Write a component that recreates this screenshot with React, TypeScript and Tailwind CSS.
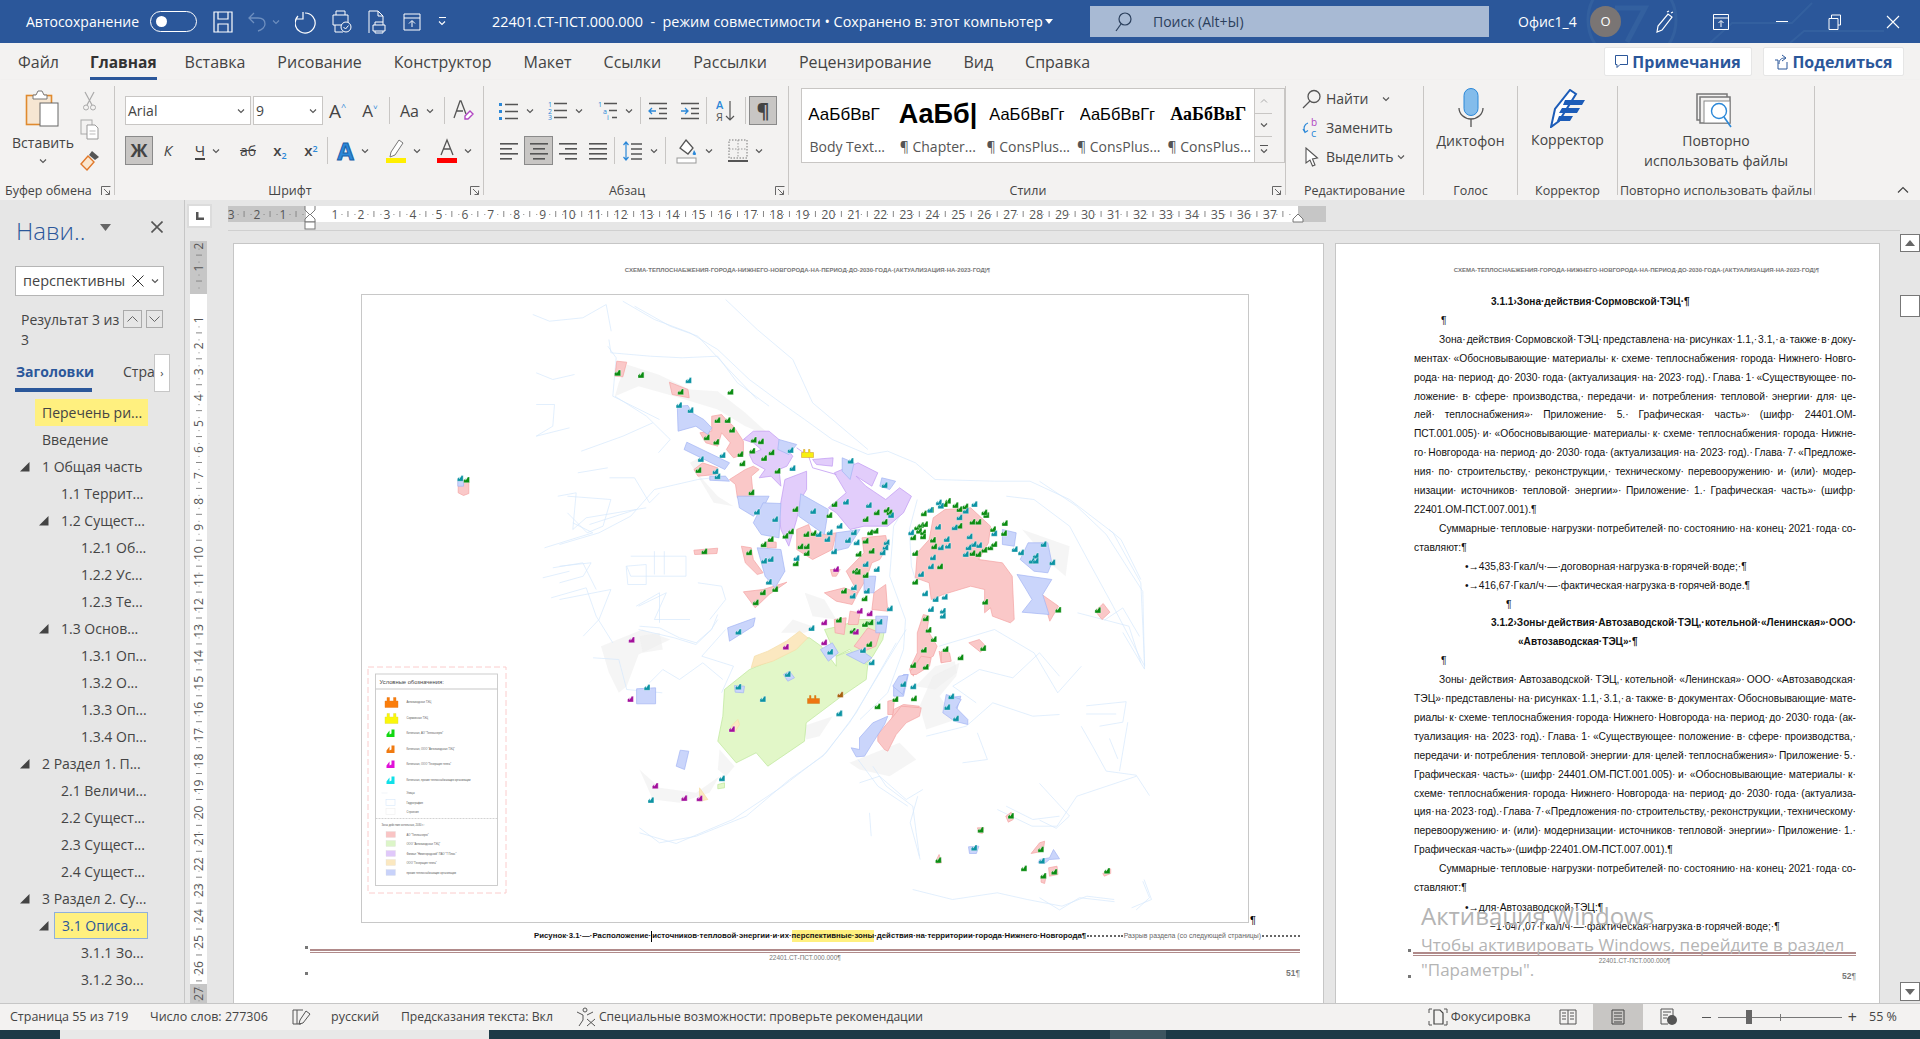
import type { ReactNode } from "react";

const ui = "font-['Open_Sans',sans-serif]";
const doc = "font-['Liberation_Sans',Arial,sans-serif]";

// ---------- small ribbon icons ----------
const Chev = ({ c = "#555" }: { c?: string }) => (
  <svg width="8" height="6" viewBox="0 0 8 6" className="shrink-0">
    <path d="M1 1.5 L4 4.5 L7 1.5" fill="none" stroke={c} strokeWidth="1.1" />
  </svg>
);

const Launcher = () => (
  <svg width="10" height="10" viewBox="0 0 10 10" className="shrink-0">
    <path d="M0.5 9 V0.5 H9.5 M3 3 L8.5 8.5 M8.5 4.5 V8.5 H4.5" fill="none" stroke="#666" strokeWidth="1" />
  </svg>
);

const Lines = ({ rows }: { rows: number[][] }) => (
  <svg width="20" height="20" viewBox="0 0 20 20">
    {rows.map(([x1, x2], i) => (
      <rect key={i} x={x1} y={2 + i * 5} width={x2 - x1} height="1.6" fill="#555" />
    ))}
  </svg>
);

const Btn = ({ w, chev, active, children }: { w: number; chev?: boolean; active?: boolean; children: ReactNode }) => (
  <div
    className={`flex h-[29px] shrink-0 items-center justify-center gap-[7px] text-[#444] ${active ? "border border-[#8a8a8a] bg-[#c8c6c4]" : ""}`}
    style={{ width: w }}
  >
    {children}
    {chev && <Chev />}
  </div>
);

const Sep = () => <div className="mx-px h-[27px] w-px shrink-0 bg-[#c8c6c4]" />;

const Group = ({ w, label, launcher, children }: { w: number; label: string; launcher?: boolean; children: ReactNode }) => (
  <div className="flex h-[109px] shrink-0 flex-col border-r border-[#c8c6c4]" style={{ width: w }}>
    <div className="h-[95px] overflow-hidden">{children}</div>
    <div className={`relative flex h-[14px] translate-y-[3px] items-center whitespace-nowrap text-[12.5px] leading-[14px] text-[#444] ${launcher ? (w < 120 ? "pl-[5px]" : "justify-center pr-[18px]") : "justify-center"}`}>
      {label}
      {launcher && (
        <span className="absolute right-[3px] top-[2px]">
          <Launcher />
        </span>
      )}
    </div>
  </div>
);

const Style = ({ sample, name, cls }: { sample: string; name: string; cls: string }) => (
  <div className="flex h-full w-[90.5px] shrink-0 flex-col items-center overflow-hidden">
    <div className={`flex h-[46px] w-[78px] items-center justify-start overflow-hidden whitespace-nowrap pt-[5px] text-black ${cls}`}>{sample}</div>
    <div className="whitespace-nowrap pt-[2px] text-[14px] leading-[20px] text-[#555]">{name}</div>
  </div>
);

const Ribbon = () => (
  <div className={`flex h-[120px] shrink-0 bg-[#f3f2f1] pt-[6px] shadow-[0_2px_3px_rgba(0,0,0,0.2)] ${ui}`}>
    <Group w={115} label="Буфер обмена" launcher>
      <div className="flex">
        <div className="ml-[4px] flex w-[78px] flex-col items-center pt-[3px]">
          <svg width="38" height="38" viewBox="0 0 38 38">
            <rect x="2.5" y="6.5" width="25" height="29" fill="#f6e6d2" stroke="#e08a2e" strokeWidth="1.6" />
            <path d="M9 6 h3 l2 -4 h4 l2 4 h3 v4 h-14z" fill="#fff" stroke="#777" />
            <rect x="16" y="14" width="18" height="23" fill="#fff" stroke="#666" />
          </svg>
          <div className="mt-[7px] text-[14px] leading-[18px] text-[#444]">Вставить</div>
          <div className="mt-[6px]">
            <Chev />
          </div>
        </div>
        <div className="flex w-[16px] flex-col items-center gap-[8px] pt-[5px]">
          <svg width="16" height="20" viewBox="0 0 16 20" className="shrink-0">
            <path d="M3 1 L10 14 M12 1 L5 14" stroke="#aaa" strokeWidth="1.2" fill="none" />
            <circle cx="4" cy="16.5" r="2.5" fill="none" stroke="#aaa" />
            <circle cx="11" cy="16.5" r="2.5" fill="none" stroke="#aaa" />
          </svg>
          <svg width="20" height="22" viewBox="0 0 20 22" className="shrink-0">
            <rect x="1" y="1" width="11" height="14" fill="#f3f2f1" stroke="#aaa" />
            <path d="M7 6 h8 l3 3 v11 h-11z" fill="#fff" stroke="#999" />
            <path d="M9.5 12 h6 M9.5 15 h6" stroke="#bbb" />
          </svg>
          <svg width="22" height="22" viewBox="0 0 22 22" className="shrink-0">
            <path d="M13 2 l7 6 -4 3 -6 -5z" fill="#555" />
            <path d="M9 7 l6 6 -7 8 -6 -6z" fill="#fbe7cf" stroke="#e0782a" strokeWidth="1.4" />
          </svg>
        </div>
      </div>
    </Group>

    <Group w={369} label="Шрифт" launcher>
      <div className="pl-[10px] pt-[10px]">
        <div className="flex items-center">
          <div className="mr-[2px] flex h-[29px] w-[126px] items-center justify-between border border-[#c8c6c4] bg-white pl-[2px] pr-[5px] text-[14px] text-[#444]">
            Arial
            <Chev />
          </div>
          <div className="flex h-[29px] w-[70px] items-center justify-between border border-[#c8c6c4] bg-white pl-[2px] pr-[5px] text-[14px] text-[#444]">
            9
            <Chev />
          </div>
          <Btn w={29}>
            <span className="text-[19px] leading-[24px]">A</span>
            <span className="-ml-[7px] -mt-2 text-[9px] leading-[12px] text-[#2b88d8]">^</span>
          </Btn>
          <Btn w={36}>
            <span className="text-[17px] leading-[24px]">A</span>
            <span className="-ml-[7px] -mt-2 text-[8px] leading-[12px] text-[#2b88d8]">˅</span>
          </Btn>
          <Sep />
          <Btn w={52} chev>
            <span className="text-[16px]">Aa</span>
          </Btn>
          <Sep />
          <Btn w={34}>
            <svg width="22" height="24" viewBox="0 0 22 24">
              <path d="M2 19 L8 2 H9 L14 15 M4.5 12 H11" fill="none" stroke="#555" strokeWidth="1.3" />
              <path d="M13 17 l5 -5 3 3 -5 5 -3 0z" fill="#fff" stroke="#b146c2" strokeWidth="1.4" />
            </svg>
          </Btn>
        </div>
        <div className="mt-[11px] flex items-center">
          <Btn w={28} active>
            <span className="text-[18px] font-bold">Ж</span>
          </Btn>
          <Btn w={30}>
            <span className="text-[15px] italic">К</span>
          </Btn>
          <Btn w={49} chev>
            <span className="border-b-2 border-[#444] text-[15px] leading-[16px]">Ч</span>
          </Btn>
          <Btn w={32}>
            <span className="text-[14px] line-through">аб</span>
          </Btn>
          <Btn w={32}>
            <span className="text-[15px] font-semibold">x<sub className="text-[9px] text-[#2b88d8]">2</sub></span>
          </Btn>
          <Btn w={30}>
            <span className="text-[15px] font-semibold">x<sup className="text-[9px] text-[#2b88d8]">2</sup></span>
          </Btn>
          <Sep />
          <Btn w={48} chev>
            <span className="text-[24px] font-bold leading-none text-[#2b88d8] [-webkit-text-stroke:1px_#1a5fa8]">A</span>
          </Btn>
          <Btn w={52} chev>
            <svg width="20" height="26" viewBox="0 0 20 26">
              <path d="M5 14 L13 2 l4 3 -8 12 -5 2z" fill="#fff" stroke="#777" />
              <rect x="0" y="20" width="20" height="5" fill="#ffef00" />
            </svg>
          </Btn>
          <Btn w={50} chev>
            <svg width="20" height="26" viewBox="0 0 20 26">
              <path d="M4 17 L10 2 L16 17 M6 11 H14" fill="none" stroke="#555" strokeWidth="1.3" />
              <rect x="0" y="20" width="20" height="5" fill="#f00" />
            </svg>
          </Btn>
        </div>
      </div>
    </Group>

    <Group w={305} label="Абзац" launcher>
      <div className="pl-[9px] pt-[10px]">
        <div className="flex items-center">
          <Btn w={46} chev>
            <svg width="20" height="20" viewBox="0 0 20 20">
              <path d="M0 2h3v3H0zM0 9h3v3H0zM0 16h3v3H0z" fill="#2b88d8" />
              <path d="M6 3.5h13M6 10.5h13M6 17.5h13" stroke="#555" strokeWidth="1.6" />
            </svg>
          </Btn>
          <Btn w={52} chev>
            <svg width="20" height="21" viewBox="0 0 20 21">
              <text x="0" y="7" fontSize="7" fill="#2b88d8">1</text>
              <text x="0" y="13.5" fontSize="7" fill="#2b88d8">2</text>
              <text x="0" y="20" fontSize="7" fill="#2b88d8">3</text>
              <path d="M6 3.5h13M6 10.5h13M6 17.5h13" stroke="#555" strokeWidth="1.6" />
            </svg>
          </Btn>
          <Btn w={48} chev>
            <svg width="20" height="21" viewBox="0 0 20 21">
              <text x="0" y="7" fontSize="7" fill="#2b88d8">1</text>
              <text x="5" y="13.5" fontSize="7" fill="#2b88d8">a</text>
              <text x="9" y="20" fontSize="7" fill="#2b88d8">i</text>
              <path d="M6 3.5h13M11 10.5h8M14 17.5h5" stroke="#555" strokeWidth="1.6" />
            </svg>
          </Btn>
          <Sep />
          <Btn w={32}>
            <svg width="20" height="20" viewBox="0 0 20 20">
              <path d="M1 2.5h18M11 7.5h8M11 12.5h8M1 17.5h18" stroke="#555" strokeWidth="1.5" />
              <path d="M8 10H1M4 7l-3 3 3 3" fill="none" stroke="#2b88d8" strokeWidth="1.3" />
            </svg>
          </Btn>
          <Btn w={31}>
            <svg width="20" height="20" viewBox="0 0 20 20">
              <path d="M1 2.5h18M11 7.5h8M11 12.5h8M1 17.5h18" stroke="#555" strokeWidth="1.5" />
              <path d="M1 10h7M5 7l3 3-3 3" fill="none" stroke="#2b88d8" strokeWidth="1.3" />
            </svg>
          </Btn>
          <Sep />
          <Btn w={36}>
            <svg width="20" height="24" viewBox="0 0 20 24">
              <text x="0" y="10" fontSize="11" fill="#2b88d8" fontWeight="600">A</text>
              <text x="0" y="22" fontSize="11" fill="#555">Я</text>
              <path d="M14 2v19M10 17l4 4 4-4" fill="none" stroke="#555" strokeWidth="1.2" />
            </svg>
          </Btn>
          <Sep />
          <div className="ml-[2px]">
            <Btn w={28} active>
              <span className="text-[20px] font-bold">¶</span>
            </Btn>
          </div>
        </div>
        <div className="mt-[11px] flex items-center">
          <Btn w={31}>
            <Lines rows={[[1, 19], [1, 13], [1, 19], [1, 13]]} />
          </Btn>
          <Btn w={29} active>
            <Lines rows={[[1, 19], [4, 16], [1, 19], [4, 16]]} />
          </Btn>
          <Btn w={30}>
            <Lines rows={[[1, 19], [7, 19], [1, 19], [7, 19]]} />
          </Btn>
          <Btn w={30}>
            <Lines rows={[[1, 19], [1, 19], [1, 19], [1, 19]]} />
          </Btn>
          <Sep />
          <Btn w={48} chev>
            <svg width="20" height="22" viewBox="0 0 20 22">
              <path d="M3 2v18M0.5 5L3 2l2.5 3M0.5 17L3 20l2.5-3" fill="none" stroke="#2b88d8" strokeWidth="1.2" />
              <path d="M8 4h11M8 9h11M8 14h11M8 19h11" stroke="#555" strokeWidth="1.5" />
            </svg>
          </Btn>
          <Sep />
          <Btn w={54} chev>
            <svg width="22" height="26" viewBox="0 0 22 26">
              <path d="M10 2 l7 8 -5 6 -8 -6z" fill="#fff" stroke="#555" strokeWidth="1.3" />
              <path d="M18 12c1 2 2 3 2 4s-1 1-2 1-2-1-1-2z" fill="#2b88d8" />
              <rect x="1" y="20" width="19" height="5" fill="#fff" stroke="#999" />
            </svg>
          </Btn>
          <Btn w={48} chev>
            <svg width="20" height="24" viewBox="0 0 20 24">
              <rect x="1" y="1" width="18" height="18" fill="none" stroke="#777" strokeDasharray="1.5 1.5" />
              <path d="M10 1v18M1 10h18" stroke="#999" strokeDasharray="1.5 1.5" />
              <path d="M0 22h20" stroke="#555" strokeWidth="2" />
            </svg>
          </Btn>
        </div>
      </div>
    </Group>

    <Group w={497} label="Стили" launcher>
      <div className="ml-[12px] mt-[2px] flex h-[75px] border border-[#c8c6c4]">
        <div className="flex w-[452px] overflow-hidden bg-white">
          <Style sample="АаБбВвГ" name="Body Text..." cls={`${doc} text-[17px]`} />
          <Style sample="АаБб|" name="¶ Chapter..." cls={`${doc} text-[27px] font-bold`} />
          <Style sample="АаБбВвГг" name="¶ ConsPlus..." cls={`${doc} text-[16.5px]`} />
          <Style sample="АаБбВвГг" name="¶ ConsPlus..." cls={`${doc} text-[16.5px]`} />
          <Style sample="АаБбВвГ" name="¶ ConsPlus..." cls="font-['Liberation_Serif',serif] text-[18px] font-bold" />
        </div>
        <div className="flex w-[18px] flex-col border-l border-[#c8c6c4] bg-[#f3f2f1]">
          <div className="flex h-[25px] items-center justify-center border-b border-[#c8c6c4]">
            <svg width="8" height="6" viewBox="0 0 8 6">
              <path d="M1 4.5L4 1.5l3 3" fill="none" stroke="#aaa" />
            </svg>
          </div>
          <div className="flex h-[23px] items-center justify-center border-b border-[#c8c6c4]">
            <Chev />
          </div>
          <div className="flex flex-1 flex-col items-center justify-center gap-[2px]">
            <div className="h-px w-[8px] bg-[#555]" />
            <Chev />
          </div>
        </div>
      </div>
    </Group>

    <Group w={138} label="Редактирование">
      <div className="flex flex-col gap-[9px] pl-[16px] pt-[3px] text-[14px] leading-[20px] text-[#444]">
        <div className="flex items-center gap-[4px]">
          <svg width="20" height="20" viewBox="0 0 20 20">
            <circle cx="12" cy="7.5" r="6" fill="none" stroke="#555" strokeWidth="1.3" />
            <path d="M8 12L1 19" stroke="#555" strokeWidth="1.3" />
          </svg>
          Найти
          <span className="ml-[9px]">
            <Chev />
          </span>
        </div>
        <div className="flex items-center gap-[4px]">
          <svg width="20" height="20" viewBox="0 0 20 20">
            <text x="9" y="8" fontSize="10" fill="#b146c2">b</text>
            <text x="9" y="19" fontSize="11" fill="#2b88d8">c</text>
            <path d="M6 5C2 6 1 11 3 14M1 11l2 3.5 3-2" fill="none" stroke="#2b88d8" strokeWidth="1.2" />
          </svg>
          Заменить
        </div>
        <div className="flex items-center gap-[4px]">
          <svg width="20" height="20" viewBox="0 0 20 20">
            <path d="M4 1v15l4-3 2.5 6 2.5-1-2.5-6 5-1z" fill="#fff" stroke="#555" strokeWidth="1.1" />
          </svg>
          Выделить
          <Chev />
        </div>
      </div>
    </Group>

    <Group w={94} label="Голос">
      <div className="flex flex-col items-center pt-[2px]">
        <svg width="30" height="40" viewBox="0 0 30 40">
          <rect x="8" y="0.5" width="14" height="27" rx="7" fill="#83bceb" stroke="#2b88d8" />
          <path d="M3 20a12 11 0 0 0 24 0M15 31v8" fill="none" stroke="#555" strokeWidth="1.3" />
        </svg>
        <div className="mt-[3px] text-[14px] leading-[20px] text-[#444]">Диктофон</div>
      </div>
    </Group>

    <Group w={100} label="Корректор">
      <div className="flex flex-col items-center pt-[3px]">
        <svg width="36" height="39" viewBox="0 0 36 39">
          <path d="M1 38 L5 20 L20 1 L26 5 L9 32z" fill="#fff" stroke="#1c5cb8" strokeWidth="2" />
          <path d="M15 11h20l-3 5H13zM12 19h18l-3 5H9zM9 27h14l-3 5H7z" fill="#1c5cb8" />
        </svg>
        <div className="mt-[2px] text-[14px] leading-[20px] text-[#444]">Корректор</div>
      </div>
    </Group>

    <Group w={197} label="Повторно использовать файлы">
      <div className="flex flex-col items-center pt-[7px] text-[14px] leading-[20px] text-[#444]">
        <svg width="40" height="36" viewBox="0 0 40 36">
          <rect x="1" y="1" width="30" height="26" fill="#f3f2f1" stroke="#777" strokeWidth="1.5" />
          <rect x="4" y="4" width="30" height="26" fill="#f3f2f1" stroke="#777" strokeWidth="1.5" />
          <rect x="8" y="8" width="26" height="22" fill="#fff" stroke="#888" />
          <circle cx="23" cy="18" r="7.5" fill="#fff" stroke="#2b88d8" strokeWidth="1.4" />
          <path d="M28 24l7 10" stroke="#2b88d8" strokeWidth="1.6" />
        </svg>
        <div className="mt-[2px]">Повторно</div>
        <div>использовать файлы</div>
      </div>
    </Group>

    <div className="flex flex-1 items-end justify-end pb-[6px] pr-[11px]">
      <svg width="12" height="8" viewBox="0 0 12 8">
        <path d="M1 6.5L6 1.5l5 5" fill="none" stroke="#444" strokeWidth="1.2" />
      </svg>
    </div>
  </div>
);

const TitleBar = () => (
  <div className={`relative flex h-[43px] shrink-0 items-center overflow-hidden bg-[#2b579a] pl-[26px] text-[14px] text-white ${ui}`}>
    <svg className="absolute left-[1560px] top-0" width="360" height="43" viewBox="0 0 360 43">
      <circle cx="72" cy="20" r="44" fill="none" stroke="#33609f" strokeWidth="3" />
      <path d="M55 8h30l-18 34" fill="none" stroke="#33609f" strokeWidth="5" />
      <path d="M150 43l22-20h60l20-20M230 43l14-12h80" fill="none" stroke="#33609f" strokeWidth="2" />
    </svg>
    <span className="relative w-[124px]">Автосохранение</span>
    <div className="relative flex h-[21px] w-[47px] items-center rounded-full border border-white pl-[5px]">
      <div className="h-[11px] w-[11px] rounded-full bg-white" />
    </div>
    <svg className="relative ml-[16px]" width="20" height="22" viewBox="0 0 20 22">
      <path d="M1 1h18v20H1zM5 1v7h10V1M5 21v-8h10v8" fill="none" stroke="#fff" strokeWidth="1.2" />
    </svg>
    <svg className="relative ml-[15px]" width="18" height="20" viewBox="0 0 18 20">
      <path d="M6 1L1 6l5 5M1 6h9c5 0 7 3 7 6 0 3-3 6-7 7" fill="none" stroke="#6e8fbf" strokeWidth="1.3" />
    </svg>
    <span className="relative ml-[6px]">
      <Chev c="#6e8fbf" />
    </span>
    <svg className="relative ml-[15px]" width="22" height="24" viewBox="0 0 22 24">
      <path d="M8 1v7H1M3 5a10 10 0 1 0 7-3" fill="none" stroke="#fff" strokeWidth="1.2" transform="translate(0 1)" />
    </svg>
    <svg className="relative ml-[14px]" width="21" height="24" viewBox="0 0 21 24">
      <path d="M5 5V1h9v4M2 5h15v10H2z" fill="none" stroke="#fff" />
      <path d="M4 15v7h8" fill="none" stroke="#fff" />
      <circle cx="15" cy="17" r="5" fill="#2b579a" stroke="#fff" />
      <path d="M12.5 17l2 2 3-3.5" fill="none" stroke="#fff" />
    </svg>
    <svg className="relative ml-[15px]" width="20" height="24" viewBox="0 0 20 24">
      <path d="M2 23V1h9l5 5v6M11 1v5h5" fill="none" stroke="#fff" />
      <path d="M6 15h12v6H6zM8 15v-3h8v3M8 21v2h8v-2" fill="#2b579a" stroke="#fff" />
    </svg>
    <svg className="relative ml-[16px]" width="18" height="18" viewBox="0 0 18 18">
      <path d="M1 1h16v16H1zM1 5h16M9 14V8M6 10.5L9 7.5l3 3" fill="none" stroke="#fff" />
    </svg>
    <span className="relative ml-[17px] flex flex-col items-center gap-[2px]">
      <span className="h-px w-[7px] bg-white" />
      <Chev c="#fff" />
    </span>
    <span className="relative ml-[46px] w-[553px] whitespace-nowrap text-[14.4px]">
      22401.СТ-ПСТ.000.000&nbsp; - &nbsp;режим совместимости • Сохранено в: этот компьютер
    </span>
    <svg className="relative" width="8" height="5" viewBox="0 0 8 5">
      <path d="M0 0h8L4 5z" fill="#fff" />
    </svg>
    <div className="relative ml-[37px] flex h-[31px] w-[399px] items-center bg-[#a8bad4] pl-[24px] text-[#2b3f5c]">
      <svg width="18" height="20" viewBox="0 0 18 20">
        <circle cx="11" cy="7" r="6" fill="none" stroke="#2b3f5c" strokeWidth="1.2" />
        <path d="M7 12L2 19" stroke="#2b3f5c" strokeWidth="1.2" />
      </svg>
      <span className="ml-[21px]">Поиск (Alt+Ы)</span>
    </div>
    <span className="relative ml-[29px] w-[60px] whitespace-nowrap">Офис1_4</span>
    <div className="relative ml-[12px] flex h-[31px] w-[31px] items-center justify-center rounded-full bg-[#7a7574] text-[13px]">О</div>
    <svg className="relative ml-[33px]" width="20" height="24" viewBox="0 0 20 24">
      <path d="M3 22l1-6L14 4l4 3L8 20zM13 2l2-1M17 3l2-1" fill="none" stroke="#fff" strokeWidth="1.2" />
    </svg>
    <svg className="relative ml-[39px]" width="16" height="16" viewBox="0 0 16 16">
      <path d="M.5.5h15v15H.5zM.5 4h15M8 13V7M5.5 9L8 6.5 10.5 9" fill="none" stroke="#fff" />
    </svg>
    <div className="relative ml-[47px] h-px w-[12px] bg-white" />
    <svg className="relative ml-[40px]" width="14" height="16" viewBox="0 0 14 16">
      <path d="M1 4.5h9v11H1zM3.5 4.5V1h9v10h-2.5" fill="none" stroke="#fff" />
    </svg>
    <svg className="relative ml-[44px]" width="14" height="14" viewBox="0 0 14 14">
      <path d="M1 1l12 12M13 1L1 13" stroke="#fff" strokeWidth="1.1" />
    </svg>
  </div>
);

const tabs = ["Файл", "Главная", "Вставка", "Рисование", "Конструктор", "Макет", "Ссылки", "Рассылки", "Рецензирование", "Вид", "Справка"];

const TabRow = () => (
  <div className={`flex h-[37px] shrink-0 items-start bg-[#f3f2f1] pl-[18px] pt-[8px] text-[16px] leading-[22px] text-[#444] ${ui}`}>
    <div className="flex gap-[32px]">
      {tabs.map((t) =>
        t === "Главная" ? (
          <div key={t} className="relative -ml-[1px] -mr-[4px] text-[15.5px] font-bold text-[#333]">
            {t}
            <div className="absolute left-0 right-0 top-[26px] h-[3px] bg-[#2b579a]" />
          </div>
        ) : (
          <div key={t}>{t}</div>
        ),
      )}
    </div>
    <div className="ml-auto mr-[16px] flex gap-[11px] text-[16px] font-bold text-[#2b579a]">
      <div className="-mt-[4px] flex h-[29px] w-[148px] items-center justify-center gap-[4px] rounded-[2px] border border-[#e6e6e6] bg-white">
        <svg width="13" height="14" viewBox="0 0 13 14">
          <path d="M.5.5h12v9H5l-3 3v-3H.5z" fill="none" stroke="#2b579a" />
        </svg>
        Примечания
      </div>
      <div className="-mt-[4px] flex h-[29px] w-[141px] items-center justify-center gap-[4px] rounded-[2px] border border-[#e6e6e6] bg-white">
        <svg width="14" height="16" viewBox="0 0 14 16">
          <path d="M1 6h3v9h9V8M5 10c0-4 2-6 6-6M8 1l4 3-4 3" fill="none" stroke="#2b579a" />
        </svg>
        Поделиться
      </div>
    </div>
  </div>
);

// ---------- navigation pane ----------
const nav: [string, number, boolean, string?][] = [
  ["Перечень ри...", 1, false, "hit"],
  ["Введение", 1, false],
  ["1 Общая часть", 1, true],
  ["1.1 Террит...", 2, false],
  ["1.2 Сущест...", 2, true],
  ["1.2.1 Об...", 3, false],
  ["1.2.2 Ус...", 3, false],
  ["1.2.3 Те...", 3, false],
  ["1.3 Основ...", 2, true],
  ["1.3.1 Оп...", 3, false],
  ["1.3.2  О...", 3, false],
  ["1.3.3 Оп...", 3, false],
  ["1.3.4 Оп...", 3, false],
  ["2 Раздел 1. П...", 1, true],
  ["2.1 Величи...", 2, false],
  ["2.2 Сущест...", 2, false],
  ["2.3 Сущест...", 2, false],
  ["2.4 Сущест...", 2, false],
  ["3 Раздел 2. Су...", 1, true],
  ["3.1 Описа...", 2, true, "sel"],
  ["3.1.1 Зо...", 3, false],
  ["3.1.2 Зо...", 3, false],
];

const NavRow = ({ text, level, tri, mark }: { text: string; level: number; tri: boolean; mark?: string }) => {
  const left = level === 1 ? 35 : level === 2 ? 54 : 74;
  return (
    <div className="relative flex h-[27px] items-center">
      {tri && (
        <svg className="absolute top-[9px]" style={{ left: left - 15 }} width="10" height="10" viewBox="0 0 10 10">
          <path d="M0 9.5h9.5V0z" fill="#444" />
        </svg>
      )}
      <div
        className={`flex h-[27px] items-center whitespace-nowrap pl-[7px] ${mark === "hit" ? "bg-[#fff07f]" : ""} ${mark === "sel" ? "border border-[#8fb0dc] bg-[#fff07f] text-[#2b579a]" : ""}`}
        style={{ marginLeft: left, width: 148 - left }}
      >
        {text}
      </div>
    </div>
  );
};

const NavPane = () => (
  <div className={`flex h-full w-[185px] shrink-0 flex-col border-r border-[#c6c6c6] bg-[#e6e6e6] text-[14px] text-[#444] ${ui}`}>
    <div className="flex h-[58px] items-start pl-[16px] pt-[12px]">
      <span className="text-[24px] font-light leading-[38px] text-[#2b579a]">Нави..</span>
      <svg className="ml-[15px] mt-[12px]" width="11" height="7" viewBox="0 0 11 7">
        <path d="M0 0h11L5.500 7z" fill="#666" />
      </svg>
      <svg className="ml-[40px] mt-[9px]" width="12" height="12" viewBox="0 0 12 12">
        <path d="M.5.5l11 11M11.5.5l-11 11" stroke="#555" strokeWidth="1.6" />
      </svg>
    </div>
    <div className="ml-[15px] mt-[8px] flex h-[30px] w-[149px] items-center border border-[#b5b5b5] bg-white pl-[7px] text-[14.5px]">
      <span className="w-[102px] overflow-hidden whitespace-nowrap">перспективные</span>
      <svg className="ml-[7px]" width="12" height="12" viewBox="0 0 12 12">
        <path d="M.5.5l11 11M11.5.5l-11 11" stroke="#333" />
      </svg>
      <span className="ml-[7px]">
        <Chev />
      </span>
    </div>
    <div className="flex pl-[21px] pt-[14px]">
      <div className="w-[102px] leading-[20px]">Результат 3 из 3</div>
      <div className="flex gap-[4px]">
        <div className="flex h-[18px] w-[19px] items-center justify-center border border-[#aaa]">
          <svg width="11" height="6" viewBox="0 0 11 6">
            <path d="M.5 5.5l5-5 5 5" fill="none" stroke="#666" />
          </svg>
        </div>
        <div className="flex h-[18px] w-[17px] items-center justify-center border border-[#aaa]">
          <svg width="11" height="6" viewBox="0 0 11 6">
            <path d="M.5.5l5 5 5-5" fill="none" stroke="#666" />
          </svg>
        </div>
      </div>
    </div>
    <div className="mt-[4px] flex h-[38px] items-start pl-[15px]">
      <div className="mt-[6px] h-[32px] w-[77px] border-b-4 border-[#2b579a] pl-px text-[14px] font-bold leading-[23px] text-[#2b579a]">Заголовки</div>
      <div className="ml-[31px] mt-[6px] w-[31px] overflow-hidden whitespace-nowrap text-[14px] leading-[23px]">Страницы</div>
      <div className="flex h-[38px] w-[16px] items-center justify-center border border-[#c6c6c6] bg-white text-[11px]">›</div>
    </div>
    <div className="mt-[7px] flex flex-col">
      {nav.map(([text, level, tri, mark], i) => (
        <NavRow key={i} text={text} level={level} tri={tri} mark={mark} />
      ))}
    </div>
  </div>
);

// ---------- rulers ----------
const HRuler = () => {
  const zero = 81; // local x of the 0 mark
  const cm = 25.97;
  const nums = [-3, -2, -1, ...Array.from({ length: 37 }, (_, i) => i + 1)];
  return (
    <svg width="1100" height="24" viewBox="0 0 1100 24" className={`block ${ui}`}>
      <rect x="0" y="0" width="1098" height="16" fill="#fff" />
      <rect x="0" y="0" width="78" height="16" fill="#c6c6c6" />
      <rect x="1070" y="0" width="28" height="16" fill="#c6c6c6" />
      {nums.map((n) => (
        <g key={n}>
          <text x={zero + n * cm} y="12.5" fontSize="12" fill="#555" textAnchor="middle">
            {Math.abs(n)}
          </text>
          <rect x={zero + (n + 0.5) * cm - 0.5} y="5" width="1" height="6" fill="#888" />
          <rect x={zero + (n + 0.25) * cm} y="8" width="1" height="1" fill="#888" />
          <rect x={zero + (n + 0.75) * cm} y="8" width="1" height="1" fill="#888" />
        </g>
      ))}
      <path d="M77 -1h10v5l-5 5 -5-5zM82 8l5 5v3h-10v-3z" fill="#fff" stroke="#777" />
      <rect x="77" y="16" width="10" height="7" fill="#fff" stroke="#777" />
      <path d="M1065 16v-3l5-5 5 5v3z" fill="#fff" stroke="#777" />
    </svg>
  );
};

const VRuler = () => {
  const zero = 53;
  const cm = 25.92;
  const nums = [-2, -1, ...Array.from({ length: 27 }, (_, i) => i + 1)];
  return (
    <svg width="17" height="762" viewBox="0 0 17 762" className={`block ${ui}`}>
      <rect width="17" height="762" fill="#fff" />
      <rect width="17" height="53" fill="#c6c6c6" />
      <rect y="743" width="17" height="19" fill="#c6c6c6" />
      {nums.map((n) => {
        const y = n === -2 ? 5 : zero + n * cm;
        return (
          <g key={n}>
            <text transform={`translate(12.5 ${y}) rotate(-90)`} fontSize="12" fill="#555" textAnchor="middle">
              {Math.abs(n)}
            </text>
            <rect x="6" y={zero + (n + 0.5) * cm - 0.5} width="6" height="1" fill="#888" />
            <rect x="8.5" y={zero + (n + 0.25) * cm} width="1" height="1" fill="#888" />
            <rect x="8.5" y={zero + (n + 0.75) * cm} width="1" height="1" fill="#888" />
          </g>
        );
      })}
    </svg>
  );
};

// ---------- the map figure; coordinates were read off crops of the map ----------
const conv = (ox: number, oy: number, sx: number, sy: number) => (s: string) =>
  s
    .trim()
    .split(/\s+/)
    .map((p) => {
      const [x, y] = p.split(",").map(Number);
      return `${(ox + x / sx).toFixed(1)},${(oy + y / sy).toFixed(1)}`;
    })
    .join(" ");
const z5 = conv(560, 300, 2.529, 3);
const z8 = conv(560, 700, 2.01, 3);
const z9 = conv(360, 290, 3, 3);
const z10 = conv(640, 620, 3, 3);
const z11 = conv(1040, 290, 3, 2.45);

const RED = [
  z5("145,185 170,188 160,232 140,230"),
  z5("278,248 325,270 328,295 285,285"),
  z5("385,350 410,345 425,365 440,380 465,425 465,465 440,475 422,450 432,430 410,400 400,440 370,430 355,400 385,395"),
  z5("362,490 400,505 395,525 350,530 340,510"),
  z5("430,540 470,510 490,500 505,510 485,530 490,590 450,595 445,555"),
  z5("340,752 400,746 398,762 342,765"),
  z5("460,740 485,745 490,780 515,820 500,825 470,790"),
  z5("525,725 548,728 548,745 525,745"),
  z5("465,877 515,870 575,848 530,885 495,925"),
  z5("600,690 630,675 640,710 700,700 690,750 640,780 600,750"),
  z5("765,715 825,708 830,740 810,780 790,790 775,840 755,880 725,815 770,760"),
  z5("670,880 720,865 755,880 740,915 700,905"),
  z5("795,880 825,855 830,935 790,930"),
  z5("695,960 725,955 720,1005 697,1000"),
  z5("735,935 760,940 755,975 730,975"),
  z5("745,1040 780,985 810,1000 800,1040 770,1055"),
  z5("685,810 710,810 700,830 690,830"),
  z5("975,630 1040,625 1090,680 1085,730 1060,780 1120,790 1145,830 1150,960 1140,970 1095,950 1090,925 1075,940 1075,870 1040,860 970,885 940,900 935,850 900,835 905,760 935,720 945,655"),
  z5("1220,885 1262,920 1240,965"),
  z5("1355,935 1375,912 1392,938 1372,960"),
  z5("920,945 935,950 930,990 955,1040 945,1070 900,1100 895,1130 885,1110 905,1060 905,1000"),
  z5("1035,1030 1062,1020 1078,1040 1065,1058"),
  z5("960,1055 985,1080 965,1090"),
  z5("845,1230 870,1215 910,1220 900,1245 860,1260 840,1260"),
  z10("745,245 765,240 760,285 745,285"),
  z10("715,345 770,280 785,260 845,265 840,290 800,310 770,345 745,395 735,390 715,365"),
  z10("812,155 825,140 845,110 875,115 870,140 830,165 815,165"),
  z10("905,95 930,100 935,125 905,130"),
  z8("897,350 908,338 912,360 902,368"),
  z8("840,385 853,385 850,402 843,400"),
  z8("948,462 965,430 975,425 972,455"),
  z8("983,505 1000,500 1002,525 985,530"),
  z8("968,530 978,530 975,552 968,548"),
  z8("1092,522 1108,508 1108,522 1095,530"),
  z8("758,480 763,465 768,490 758,492"),
  z9("296,575 328,575 328,612 312,618 296,610"),
];

const BLUE = [
  z5("298,320 325,318 335,340 365,360 385,385 375,405 345,380 300,395"),
  z5("322,428 430,490 418,510 315,450"),
  z5("380,530 420,530 430,545 380,542"),
  z5("450,590 530,590 515,625 490,650 455,625"),
  z5("515,610 560,612 555,715 510,705 490,670"),
  z5("610,583 680,630 670,705 605,650"),
  z5("700,700 760,690 730,745 695,755"),
  z5("500,745 560,750 570,815 545,865 520,830"),
  z5("555,420 600,435 580,465 552,450"),
  z5("715,475 745,490 735,540 715,515"),
  z5("815,535 850,545 835,570 810,560"),
  z5("1120,690 1155,700 1150,740 1120,735"),
  z5("1185,730 1235,730 1245,790 1235,820 1200,815 1165,780"),
  z5("1157,825 1245,840 1222,885 1238,945 1170,938 1195,900 1180,870"),
  z5("425,985 495,955 490,980 430,1025"),
  z5("195,1168 243,1165 243,1213 195,1213"),
  z5("660,1050 690,1030 705,1060 680,1085"),
  z5("725,1065 760,1050 790,1075 770,1093"),
  z5("800,950 830,950 825,1000 800,1000"),
  z5("770,830 800,830 795,880 770,880"),
  z5("845,1160 870,1125 882,1125 870,1190 845,1190"),
  z5("980,1195 1015,1190 1000,1250 975,1240"),
  z10("660,355 700,310 745,290 735,315 700,370 675,410 650,412 635,385 660,390"),
  z10("920,225 965,240 950,265 985,300 985,315 945,305 910,280"),
  z10("778,170 805,165 790,225 760,200"),
  z10("110,440 122,392 148,395 135,450"),
  z10("285,198 315,200 312,220 287,218"),
  z10("432,165 450,155 465,175 445,185"),
  z8("822,442 843,440 838,462 824,462"),
  z8("965,480 985,475 993,450 1005,478 985,480 975,492 962,490"),
  z9("295,572 312,572 312,590 295,590"),
];

const PURPLE = [
  z5("465,420 490,395 530,395 555,420 590,470 575,500 555,510 560,560 535,530 505,535 520,510 490,490 480,465 510,450 490,430"),
  z5("570,540 625,515 625,570 610,600 600,660 580,740 560,690 555,640"),
  z5("695,520 755,490 805,520 790,560 750,530 775,560 825,600 860,565 890,590 870,640 830,680 770,680 735,690 700,640 680,625 725,580"),
  z5("640,480 692,475 690,500 650,495"),
];

const GREEN = [
  z10("330,150 390,125 440,95 470,55 510,55 545,80 590,140 590,110 630,95 685,135 680,180 600,235 500,310 495,365 385,440 350,400 290,430 235,365 250,290 255,210"),
  z10("555,30 600,20 660,0 740,0 730,60 700,110 680,135 630,90 590,110"),
  z10("235,495 255,490 255,505 235,508"),
];

const TAN = [
  z10("335,145 345,110 385,95 440,65 480,35 505,55 470,90 400,125"),
  z10("275,320 295,300 300,315 285,340"),
  z10("180,505 205,540 180,545"),
];

const GRAY = [
  z5("150,250 170,195 250,225 330,270 400,275 470,340 540,415 470,380 400,330 290,290 200,260 140,290"),
  z5("330,490 360,470 355,530 400,590 440,620 390,610"),
  z5("105,1040 210,990 280,1020 200,1065 170,1160 150,1180 125,1120"),
  z5("620,880 670,900 700,960 640,950"),
  z5("590,960 650,985 620,1000 560,1000"),
  z5("950,1100 1000,1085 1005,1120 950,1170 900,1160"),
  z5("1170,690 1290,740 1280,830 1250,800"),
  z10("0,50 60,40 70,90 10,100"),
  z10("0,450 60,505 170,520 240,470 210,520 120,550 40,540"),
  z10("240,390 285,440 260,470 235,450"),
  z10("490,320 580,290 540,350 500,360"),
  z10("880,170 960,130 950,170 900,230 950,300 860,330 840,260"),
  z10("630,430 780,370 830,420 750,470 660,450"),
];

const WATER = [
  z5("160,5 240,60 330,100 400,150 480,240 560,310 620,360 690,420 780,465 830,455 900,490 950,540 1100,545 1190,545 1290,600 1400,700 1470,850 1480,1100"),
  z5("420,0 500,90 590,180 640,310 740,410 780,450"),
  z5("190,20 280,80 350,110 420,200 500,300"),
  z5("125,120 130,160 230,170 310,175 400,170 450,250 530,320"),
  z5("140,290 220,350 280,420 250,460"),
  z5("890,590 845,680 835,830 875,960 870,1050 830,1180 760,1260"),
  z5("905,600 885,690 890,800 900,840"),
  z5("1130,590 1200,600 1290,680 1340,790 1400,920 1480,1100"),
  z5("1390,690 1420,720 1470,840"),
  z5("0,735 100,700 180,650 240,570 350,540 420,530"),
  z5("20,590 130,600 110,680 70,700 20,640"),
  z5("180,770 320,770 320,830 180,830 170,800"),
  z5("240,755 240,825"),
  z5("265,755 265,825"),
  z5("0,800 80,790 60,830 0,850"),
  z5("0,900 130,870 100,960 60,1010"),
  z5("200,920 270,880 240,960 330,960"),
  z5("200,990 290,1015 345,1035 385,990 400,945"),
  z5("350,850 410,860 420,900 380,960"),
  z5("420,990 360,1070 440,1100 410,1180"),
  z5("85,1075 150,1080 170,1170 260,1180"),
  z5("960,1040 1100,990 1200,1060 1260,1180 1320,1100"),
  z5("1310,940 1440,980 1470,1090"),
  z10("0,20 60,25 120,55 170,70 215,30 235,0"),
  z10("0,625 60,670 170,650 320,590 450,480 550,410 630,310 745,120 800,30"),
  z10("0,640 110,672 280,600 430,500 560,400 650,280 770,70"),
  z10("250,180 190,130 120,180 70,150 30,190"),
  z10("860,350 980,320 1060,250 1180,290 1260,285"),
  z10("700,440 740,500 820,560 830,640 840,710"),
  z10("660,490 720,470 800,540 850,510"),
  z10("1010,250 940,200 1020,150 1120,175 1200,100 1260,170"),
  z10("1100,560 1180,600 1260,590"),
  z10("690,580 695,650"),
  z9("520,75 570,95 670,85 740,45 755,125"),
  z9("745,170 770,205 760,320 900,390"),
  z9("530,250 580,270 645,255"),
  z9("530,345 585,345 580,410 530,440 630,415"),
  z9("665,485 790,440 880,400"),
  z9("655,550 745,535"),
  z9("750,565 825,565 870,640 900,610"),
  z9("595,620 650,610 640,720 680,685 860,655"),
  z9("555,775 700,730 640,700"),
  z9("690,705 830,660"),
  z9("580,835 670,820 710,900"),
  z9("550,865 630,845"),
  z9("575,925 680,895 710,980 760,1060"),
  z9("800,830 860,825 860,885 805,885 800,830"),
  z9("830,950 900,910 900,1000"),
  z8("710,570 790,600 880,580 940,600 1010,620 1060,590 1115,600"),
  z8("1160,230 1040,290 1000,380 950,380 880,330"),
  z8("720,290 705,370 725,480"),
  z8("600,180 640,260 700,320"),
  z8("840,100 860,180 810,190"),
  z8("1175,540 1190,600 1150,625"),
  z11("0,470 110,530 200,600 310,740 315,930 250,840"),
  z11("195,810 250,780 300,850"),
  z11("140,1020 260,1010 250,1060 180,1070"),
  z11("140,1040 230,1040"),
  z11("125,1070 160,1120 200,1180 290,1190 330,1240"),
  z11("265,1060 240,1180"),
  z11("210,1100 235,1150"),
  z11("0,1210 90,1290 50,1320 0,1300"),
  z11("0,1490 60,1520 120,1490 225,1500"),
  z11("310,1450 330,1490 290,1520"),
];

const pts = (f: (s: string) => string, s: string) =>
  f(s)
    .split(" ")
    .map((p) => p.split(",").map(Number) as [number, number]);

const GREEN_M = [
  ...pts(z5, "148,222 207,228 307,278 433,278 400,363 426,363 437,392 373,415 397,428 492,422 510,427 458,465 488,455 537,460 518,477 463,493 552,515 352,513 486,580 597,630 683,648 696,615 586,697 572,710 625,705 643,702 610,742 626,742 626,762 535,720 517,736 480,760 367,757 515,880 546,870 497,910 598,793 757,764 790,755 800,695 786,700 775,725 803,640 823,668 828,632 835,640 775,660 748,815 755,818 775,828 720,875 772,898 707,962 787,970 773,975 784,1035 742,995 900,762 900,848 963,802 1077,908 1262,932 1362,933 940,632 922,643 983,605 1002,618 1012,630 1027,622 1012,680 1045,668 1060,668 905,685 915,678 925,675 910,695 920,700 895,715 920,712 945,722 948,742 1075,752 1090,745 1100,735 1080,648 1127,672 1097,690 1125,702 1060,765 1045,762 1075,640 975,615 927,958 934,992 947,1020 977,1050 922,1052 1015,1075 1072,1047 927,1103 895,1098 805,1222 850,1200 897,1198"),
  ...pts(z8, "908,350 847,392 968,451 934,508 995,518 973,530 1101,515 762,483"),
  ...pts(z9, "322,572 775,251 845,258"),
];
const TEAL_M = [
  ...pts(z5, "327,244 303,318 332,333 585,453 737,485 413,468 358,480 395,517 400,532 590,507 823,558 725,608 783,618 839,648 500,638 546,660 642,636 684,700 709,680 678,720 730,723 656,705 752,730 745,700 695,757 600,777 518,785 535,780 530,848 828,730 825,745 818,760 775,795 803,810 778,875 745,865 742,890 836,928 810,968 638,987 453,998 685,1058 768,1053 790,1090 578,1125 222,1165 453,1163 515,1200 708,1243 925,883 952,900 975,893 940,930 970,935 970,950 938,632 960,610 965,620 1050,615 1028,635 1012,655 958,683 1000,685 1038,712 980,720 983,740 965,745 1048,735 1035,745 1062,738 1028,765 945,775 940,802 915,825 890,700 1100,703 1168,760 1152,750 1205,770 1195,785 1205,785 1225,735 1247,790"),
  ...pts(z10, "35,543 248,478 600,283 822,202 792,195 936,232 924,264 950,298"),
  ...pts(z8, "834,446 970,485"),
  ...pts(z9, "303,568"),
];
const PURPLE_M = [
  ...pts(z5, "700,810 670,970 760,935 785,943 750,998 670,1030 573,1043 183,1022 180,1200"),
  ...pts(z10, "48,500 135,537 181,538 278,330"),
];

const Factory = ({ x, y, c }: { x: number; y: number; c: string }) => (
  <path transform={`translate(${x} ${y})`} d="M-3.2 2.5V0L-1.2-2V0L.6-2.5V-3.3H2.7V2.5Z" fill={c} stroke="#fff" strokeWidth="0.5" strokeOpacity="0.7" />
);

const Big = ({ x, y, c }: { x: number; y: number; c: string }) => (
  <path transform={`translate(${x} ${y})`} d="M-6 4V-1H-4V-4H-2.5V-1H1V-4H2.5V-1H6V4Z" fill={c} stroke="#c7790f" strokeWidth="0.4" />
);

const legendA: [string, string][] = [
  ["Автозаводская ТЭЦ", "b"],
  ["Сормовская ТЭЦ", "y"],
  ['Котельная, АО "Теплоэнерго"', "#12d812"],
  ['Котельная, ООО "Автозаводская ТЭЦ"', "#f07a10"],
  ['Котельная, ООО "Генерация тепла"', "#e010d8"],
  ["Котельная, прочие теплоснабжающие организации", "#10e0e8"],
];
const legendB: [string, string, number][] = [
  ['АО "Теплоэнерго"', "#f9c4c4", 835],
  ['ООО "Автозаводская ТЭЦ"', "#dcf5c8", 844],
  ['Филиал "Нижегородский" ПАО "Т Плюс"', "#e0c8fa", 854],
  ['ООО "Генерация тепла"', "#fbe8c0", 863],
  ["прочие теплоснабжающие организации", "#c8d2fa", 873],
];
const legendY = [702, 718, 733, 749, 764, 780];

const MapFigure = () => (
  <svg width="886" height="627" viewBox="362.5 295.5 886 627" className="block" fontFamily="Liberation Sans, sans-serif">
    {GRAY.map((p, i) => (
      <polygon key={i} points={p} fill="#ececec" opacity="0.55" />
    ))}
    {WATER.map((p, i) => (
      <polyline key={i} points={p} fill="none" stroke="#d6e8fc" strokeWidth="0.7" />
    ))}
    {GREEN.map((p, i) => (
      <polygon key={i} points={p} fill="#e2f7c8" stroke="#bde79a" strokeWidth="0.7" />
    ))}
    {TAN.map((p, i) => (
      <polygon key={i} points={p} fill="#fbe8c0" stroke="#f5dca6" strokeWidth="0.7" />
    ))}
    {PURPLE.map((p, i) => (
      <polygon key={i} points={p} fill="#e2cdfb" stroke="#c09af2" strokeWidth="0.7" />
    ))}
    <polyline points={z5("600,445 630,470 640,505 700,525")} fill="none" stroke="#c09af2" strokeWidth="0.8" />
    {RED.map((p, i) => (
      <polygon key={i} points={p} fill="#fac8c8" stroke="#f3a3a3" strokeWidth="0.7" />
    ))}
    {BLUE.map((p, i) => (
      <polygon key={i} points={p} fill="#cad5fb" stroke="#a3b5f3" strokeWidth="0.7" />
    ))}
    {GREEN_M.map(([x, y], i) => (
      <Factory key={i} x={x} y={y} c="#0b8c12" />
    ))}
    {TEAL_M.map(([x, y], i) => (
      <Factory key={i} x={x} y={y} c="#0c93a3" />
    ))}
    {PURPLE_M.map(([x, y], i) => (
      <Factory key={i} x={x} y={y} c="#a3109c" />
    ))}
    <Big x={814} y={700} c="#ee7512" />
    <Big x={808} y={454} c="#f7ef10" />
    <Factory x={841} y={695.5} c="#a8610f" />

    <rect x="368.5" y="667.5" width="138" height="226" fill="#fff" stroke="#fbcccc" strokeWidth="1" strokeDasharray="6 3" />
    <rect x="376" y="674.5" width="122" height="211.5" fill="#fff" stroke="#c8c8c8" strokeWidth="0.9" />
    <line x1="376" y1="689.5" x2="498" y2="689.5" stroke="#c8c8c8" strokeWidth="1.2" />
    <text x="380" y="684" fontSize="5.8" fill="#444">Условные обозначения:</text>
    {legendA.map(([t, k], i) => (
      <g key={t}>
        {k === "b" || k === "y" ? (
          <path
            transform={`translate(392 ${legendY[i] + 1})`}
            d="M-6.5 5V-1.5H-4.5V-5H-2V-1.5H2V-5H4.5V-1.5H6.5V5Z"
            fill={k === "b" ? "#fb7d0a" : "#fbf70a"}
            stroke={k === "b" ? "#e07a20" : "#d8d840"}
            strokeWidth="0.4"
          />
        ) : (
          <path transform={`translate(391 ${legendY[i] + 1})`} d="M-4 3.5V1L-1-3V1L1 0V-4H4V3.5Z" fill={k} />
        )}
        <text x="407" y={legendY[i] + 1} fontSize="2.7" fill="#555">
          {t}
        </text>
      </g>
    ))}
    <line x1="382" y1="793.5" x2="388" y2="793.5" stroke="#e8eef5" strokeWidth="0.6" />
    <text x="407" y="794.5" fontSize="2.7" fill="#555">Улицы</text>
    <rect x="386.5" y="800" width="9" height="6" fill="#fff" stroke="#d6e8fb" strokeWidth="0.6" />
    <text x="407" y="804.5" fontSize="2.7" fill="#555">Гидрография</text>
    <rect x="386.5" y="809" width="9" height="6" fill="#fff" stroke="#eeeeee" strokeWidth="0.6" />
    <text x="407" y="813.5" fontSize="2.7" fill="#555">Строения</text>
    <line x1="376" y1="819" x2="498" y2="819" stroke="#c8c8c8" strokeWidth="0.8" strokeDasharray="2 1" />
    <text x="382" y="826.5" fontSize="2.7" fill="#555">Зоны действия котельных, 2030 г.:</text>
    {legendB.map(([t, c, y]) => (
      <g key={t}>
        <rect x="386.5" y={y - 3} width="9.5" height="6" fill={c} stroke="#ddd" strokeWidth="0.3" />
        <text x="407" y={y + 1} fontSize="2.7" fill="#555">
          {t}
        </text>
      </g>
    ))}
  </svg>
);

// ---------- page text ----------
const dots = (t: string) => t.replace(/·/g, "· ");

const Just = ({ t, indent }: { t: string; indent?: boolean }) => (
  <div className={`whitespace-nowrap [text-align-last:justify] [word-spacing:-0.278em] ${indent ? "pl-[25px]" : ""}`}>{dots(t)}</div>
);

const Plain = ({ t, pl = 0, b }: { t: string; pl?: number; b?: boolean }) => (
  <div className={`whitespace-nowrap [word-spacing:-0.278em] ${b ? "text-[10.1px] font-bold" : ""}`} style={{ paddingLeft: pl }}>
    {dots(t)}
  </div>
);

const HEADER = "СХЕМА·ТЕПЛОСНАБЖЕНИЯ·ГОРОДА·НИЖНЕГО·НОВГОРОДА·НА·ПЕРИОД·ДО·2030·ГОДА·(АКТУАЛИЗАЦИЯ·НА·2023·ГОД)¶";

const PageHeader = () => (
  <div className="pl-[58px] pt-[20px] text-center">
    <div className="whitespace-nowrap text-[6px] font-bold leading-[12px] text-[#777] [word-spacing:-0.278em]">{dots(HEADER)}</div>
  </div>
);

const PageFoot = ({ num }: { num: string }) => (
  <div className="text-[#777]">
    <div className="relative">
      <span className="absolute -left-[5px] -top-[3px] h-[3px] w-[3px] bg-[#777]" />
      <div className="h-[4px] border-y border-t-2 border-[#b08a8a]" />
    </div>
    <div className="pt-[1px] text-center text-[6.5px] leading-[8px]">22401.СТ-ПСТ.000.000¶</div>
    <div className="relative mt-[6px] flex justify-end text-[8.5px] font-bold leading-[10px]">
      <span className="absolute -left-[5px] top-[4px] h-[3px] w-[3px] bg-[#777]" />
      {num}
      <span className="font-normal">¶</span>
    </div>
  </div>
);

const PageOne = () => (
  <div className={`h-[780px] w-[1091px] shrink-0 border border-[#c6c6c6] bg-white ${doc}`}>
    <PageHeader />
    <div className="mt-[18px] flex items-end pl-[127px]">
      <div className="border-[1.5px] border-[#c8c8c8]">
        <MapFigure />
      </div>
      <div className="-mb-[3px] ml-[1px] text-[11px] leading-[12px] text-black">¶</div>
    </div>
    <div className="ml-[300px] mr-[23px] mt-[7px] flex h-[12px] items-center whitespace-nowrap text-[7.8px] font-bold leading-[12px] text-[#111] [word-spacing:-0.278em]">
      <span>{dots("Рисунок·3.1·—·Расположение·")}</span>
      <span className="-ml-[0.5px] mr-[0.5px] inline-block h-[11px] w-px bg-black" />
      <span>{dots("источников·тепловой·энергии·и·их·")}</span>
      <span className="bg-[#fff07f]">{dots("перспективные·зоны")}</span>
      <span>{dots("·действия·на·территории·города·Нижнего·Новгорода¶")}</span>
      <span className="ml-[1px] h-0 flex-1 border-t-2 border-dotted border-[#666]" />
      <span className="mx-[1px] text-[6.9px] font-normal text-[#666] [word-spacing:0]">Разрыв раздела (со следующей страницы)</span>
      <span className="h-0 w-[38px] border-t-2 border-dotted border-[#666]" />
    </div>
    <div className="ml-[76px] mr-[23px] mt-[7px]">
      <PageFoot num="51" />
    </div>
  </div>
);

const PageTwo = () => (
  <div className={`relative h-[780px] w-[545px] shrink-0 border border-[#c6c6c6] bg-white ${doc}`}>
    <PageHeader />
    <div className="mt-[17px] pl-[78px] pr-[23px] text-[10.25px] leading-[18.9px] text-[#111]">
      <Plain b pl={77} t="3.1.1›Зона·действия·Сормовской·ТЭЦ·¶" />
      <Plain pl={27} t="¶" />
      <Just indent t="Зона·действия·Сормовской·ТЭЦ·представлена·на·рисунках·1.1,·3.1,·а·также·в·доку-" />
      <Just t="ментах·«Обосновывающие·материалы·к·схеме·теплоснабжения·города·Нижнего·Новго-" />
      <Just t="рода·на·период·до·2030·года·(актуализация·на·2023·год).·Глава·1·«Существующее·по-" />
      <Just t="ложение·в·сфере·производства,·передачи·и·потребления·тепловой·энергии·для·це-" />
      <Just t="лей·теплоснабжения»·Приложение·5.·Графическая·часть»·(шифр·24401.ОМ-" />
      <Just t="ПСТ.001.005)·и·«Обосновывающие·материалы·к·схеме·теплоснабжения·города·Нижне-" />
      <Just t="го·Новгорода·на·период·до·2030·года·(актуализация·на·2023·год).·Глава·7·«Предложе-" />
      <Just t="ния·по·строительству,·реконструкции,·техническому·перевооружению·и·(или)·модер-" />
      <Just t="низации·источников·тепловой·энергии»·Приложение·1.·Графическая·часть»·(шифр·" />
      <Plain t="22401.ОМ-ПСТ.007.001).¶" />
      <Just indent t="Суммарные·тепловые·нагрузки·потребителей·по·состоянию·на·конец·2021·года·со-" />
      <Plain t="ставляют:¶" />
      <Plain pl={51} t="•→435,83·Гкал/ч·—·договорная·нагрузка·в·горячей·воде;·¶" />
      <Plain pl={51} t="•→416,67·Гкал/ч·—·фактическая·нагрузка·в·горячей·воде.¶" />
      <Plain pl={92} t="¶" />
      <div className="pl-[77px] text-[10.1px] font-bold">
        <Just t="3.1.2›Зоны·действия·Автозаводской·ТЭЦ,·котельной·«Ленинская»·ООО·" />
      </div>
      <Plain b pl={104} t="«Автозаводская·ТЭЦ»·¶" />
      <Plain pl={27} t="¶" />
      <Just indent t="Зоны·действия·Автозаводской·ТЭЦ,·котельной·«Ленинская»·ООО·«Автозаводская·" />
      <Just t="ТЭЦ»·представлены·на·рисунках·1.1,·3.1,·а·также·в·документах·Обосновывающие·мате-" />
      <Just t="риалы·к·схеме·теплоснабжения·города·Нижнего·Новгорода·на·период·до·2030·года·(ак-" />
      <Just t="туализация·на·2023·год).·Глава·1·«Существующее·положение·в·сфере·производства,·" />
      <Just t="передачи·и·потребления·тепловой·энергии·для·целей·теплоснабжения»·Приложение·5.·" />
      <Just t="Графическая·часть»·(шифр·24401.ОМ-ПСТ.001.005)·и·«Обосновывающие·материалы·к·" />
      <Just t="схеме·теплоснабжения·города·Нижнего·Новгорода·на·период·до·2030·года·(актуализа-" />
      <Just t="ция·на·2023·год).·Глава·7·«Предложения·по·строительству,·реконструкции,·техническому·" />
      <Just t="перевооружению·и·(или)·модернизации·источников·тепловой·энергии»·Приложение·1.·" />
      <Plain t="Графическая·часть»·(шифр·22401.ОМ-ПСТ.007.001).¶" />
      <Just indent t="Суммарные·тепловые·нагрузки·потребителей·по·состоянию·на·конец·2021·года·со-" />
      <Plain t="ставляют:¶" />
      <div className="h-[1px]" />
      <Plain pl={51} t="•→для·Автозаводской·ТЭЦ:¶" />
      <Plain pl={76} t="−1·047,07·Гкал/ч·—·фактическая·нагрузка·в·горячей·воде;·¶" />
    </div>
    <div className="ml-[77px] mr-[23px] mt-[15px]">
      <PageFoot num="52" />
    </div>
    <div className={`absolute left-[85px] top-[656px] text-[#b4b4b4] ${ui}`}>
      <div className="text-[24px] leading-[32px]">Активация Windows</div>
      <div className="whitespace-nowrap text-[17px] leading-[25px]">Чтобы активировать Windows, перейдите в раздел</div>
      <div className="text-[17px] leading-[25px]">"Параметры".</div>
    </div>
  </div>
);

const Scrollbar = () => (
  <div className="flex h-full w-[20px] shrink-0 flex-col bg-[#e6e6e6] pt-[34px]">
    <div className="flex h-[18px] items-center justify-center border border-[#777] bg-white">
      <svg width="10" height="6" viewBox="0 0 10 6">
        <path d="M0 6L5 0l5 6z" fill="#666" />
      </svg>
    </div>
    <div className="mt-[43px] h-[22px] border border-[#777] bg-white" />
    <div className="flex-1" />
    <div className="mb-[2px] flex h-[19px] items-center justify-center border border-[#777] bg-white">
      <svg width="10" height="6" viewBox="0 0 10 6">
        <path d="M0 0L5 6l5-6z" fill="#666" />
      </svg>
    </div>
  </div>
);

const Body = () => (
  <div className="flex min-h-0 flex-1 bg-[#e6e6e6]">
    <NavPane />
    <div className="w-[43px] shrink-0 pl-[2px] pt-[4px]">
      <div className="flex h-[24px] w-[25px] items-center justify-center border-2 border-[#dcdcdc] bg-white">
        <svg width="9" height="9" viewBox="0 0 9 9">
          <path d="M1 0h2.5v5.5H9V8H1z" fill="#555" />
        </svg>
      </div>
      <div className="ml-[3px] mt-[13px]">
        <VRuler />
      </div>
    </div>
    <div className="min-w-0 flex-1 overflow-hidden">
      <div className="h-[31px] border-b border-[#d0d0d0] pt-[6px]">
        <HRuler />
      </div>
      <div className="ml-[5px] mt-[12px] flex gap-[11px]">
        <PageOne />
        <PageTwo />
      </div>
    </div>
    <Scrollbar />
  </div>
);

const StatusBar = () => (
  <div className={`flex h-[27px] shrink-0 items-center whitespace-nowrap border-t border-[#c6c6c6] bg-[#f3f2f1] text-[12.5px] text-[#444] ${ui}`}>
    <span className="ml-[10px] w-[140px]">Страница 55 из 719</span>
    <span className="w-[142px]">Число слов: 277306</span>
    <svg width="20" height="18" viewBox="0 0 20 18">
      <path d="M11 2H1v14h8M5 2v14M14 3l4 3-7 9-4 1 1-4z" fill="none" stroke="#555" />
    </svg>
    <span className="ml-[19px] w-[70px]">русский</span>
    <span className="w-[175px] text-[12.2px]">Предсказания текста: Вкл</span>
    <svg width="20" height="20" viewBox="0 0 20 20">
      <circle cx="9" cy="3" r="2" fill="none" stroke="#555" />
      <path d="M1 5l6 3v5l-4 6M17 5l-6 3M11 12l8 7M19 12l-8 7" fill="none" stroke="#555" />
    </svg>
    <span className="ml-[3px] text-[12.1px]">Специальные возможности: проверьте рекомендации</span>
    <span className="flex-1" />
    <svg width="20" height="18" viewBox="0 0 20 18">
      <path d="M1 5V1h3M16 1h3v4M19 13v4h-3M4 17H1v-4" fill="none" stroke="#555" />
      <path d="M6 2h6l3 3v11H6z" fill="none" stroke="#444" strokeWidth="1.2" />
    </svg>
    <span className="ml-[3px] w-[108px]">Фокусировка</span>
    <svg width="18" height="16" viewBox="0 0 18 16">
      <path d="M1 1h16v14H1zM9 1v14M3 4h4M3 7h4M3 10h4M11 4h4M11 7h4M11 10h4" fill="none" stroke="#555" />
    </svg>
    <div className="ml-[16px] flex h-[26px] w-[50px] items-center justify-center bg-[#c8c6c4]">
      <svg width="14" height="16" viewBox="0 0 14 16">
        <path d="M1 1h12v14H1zM3 4h8M3 7h8M3 10h8M3 13h8" fill="none" stroke="#444" />
      </svg>
    </div>
    <svg className="ml-[17px]" width="18" height="18" viewBox="0 0 18 18">
      <path d="M1 1h12v8M1 1v15h7M3 4h8M3 7h5M3 10h4" fill="none" stroke="#555" />
      <circle cx="12" cy="12" r="5" fill="#555" />
    </svg>
    <div className="ml-[24px] h-px w-[9px] bg-[#555]" />
    <div className="relative ml-[7px] h-px w-[124px] bg-[#777]">
      <div className="absolute left-[28px] -top-[7px] h-[14px] w-[6px] bg-[#666]" />
      <div className="absolute left-[62px] -top-[3px] h-[7px] w-px bg-[#777]" />
    </div>
    <span className="ml-[6px] text-[16px] leading-none">+</span>
    <span className="ml-[12px] w-[51px]">55 %</span>
  </div>
);

const Taskbar = () => (
  <div className="flex h-[9px] shrink-0 bg-[#1c3a47]">
    <div className="w-[60px]" />
    <div className="w-[429px] bg-[#e8e8e8]" />
    <div className="w-[621px]" />
    <div className="w-[56px] bg-[#3d5560]" />
    <div className="flex-1" />
  </div>
);

export default function App() {
  return (
    <div className="flex h-[1039px] w-[1920px] flex-col overflow-hidden bg-[#e6e6e6]">
      <TitleBar />
      <TabRow />
      <Ribbon />
      <Body />
      <StatusBar />
      <Taskbar />
    </div>
  );
}
